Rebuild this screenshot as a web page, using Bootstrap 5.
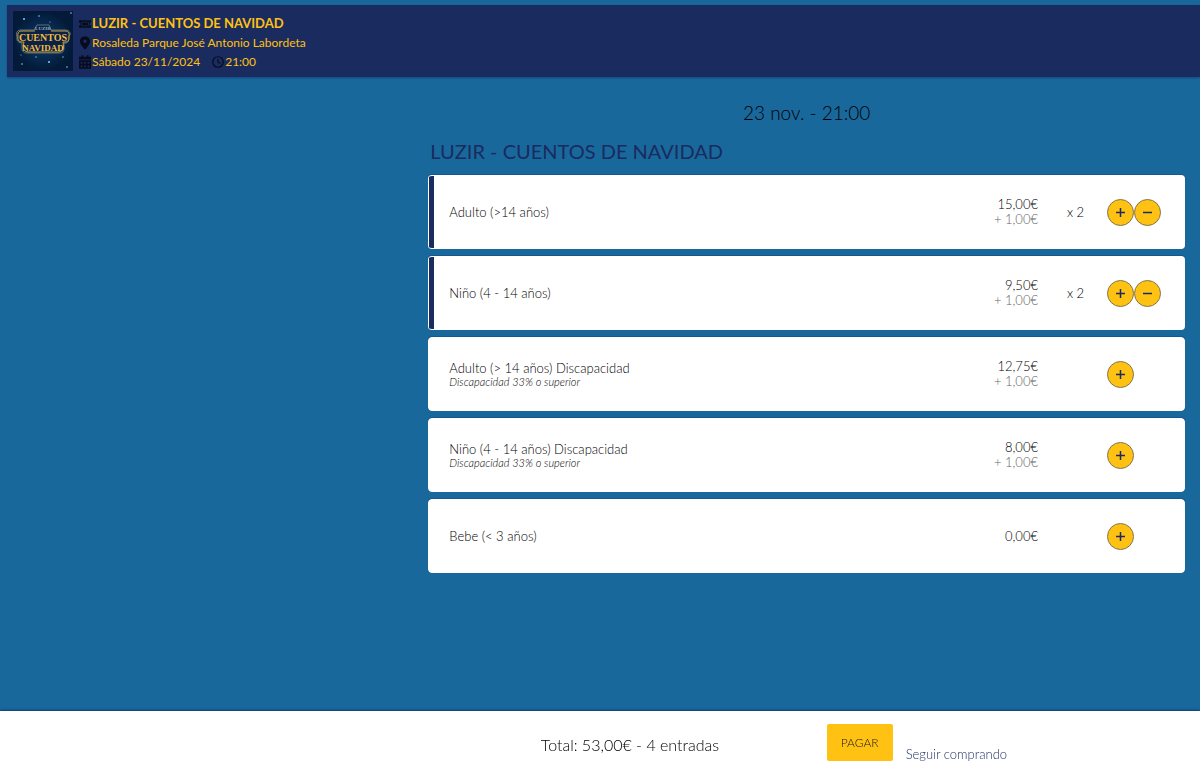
<!DOCTYPE html>
<html lang="es">
<head>
<meta charset="utf-8">
<meta name="viewport" content="width=device-width, initial-scale=1">
<title>LUZIR - Cuentos de Navidad</title>
<link href="https://cdn.jsdelivr.net/npm/bootstrap@5.3.0/dist/css/bootstrap.min.css" rel="stylesheet">
<style>
:root { --navy: #1a2b5f; --sea: #19689c; --gold: #ffc112; }
body { background: var(--sea); color: #000; font-family: Lato, sans-serif; font-weight: 300; font-size: 13px; line-height: 16px; }
.event-bar { background: var(--navy); color: var(--gold); margin: 5px 0 0 7px; padding: 6px; min-height: 72px; gap: 6px; box-shadow: 0 1px 2px rgba(0, 0, 60, .3); }
.event-logo { width: 60px; height: 60px; }
.event-info { font-size: 12px; font-weight: 400; line-height: 19px; padding-top: 3px; }
.event-info h1 { font-size: 13px; font-weight: 700; line-height: 19px; }
.event-info svg { width: 12px; height: 14px; flex: none; color: #060b1e; margin-right: 1px; }
.page-area { padding: 24px 0 100px 20px; }
.ticket-column { padding: 0 15px; }
.session-date { font-size: 19px; line-height: 24px; color: #000; }
.zone-name { font-size: 20px; font-weight: 400; line-height: 24px; color: var(--navy); margin: 14px 0 12px 2px; }
.ticket { background: #fff; border: 1px solid #fff; border-radius: 4px; height: 74px; margin-bottom: 7px; padding-left: 20px; box-shadow: 0 -1px 1px rgba(0, 50, 120, .3); }
.ticket.chosen { border-left: 0; padding-left: 21px; background: linear-gradient(90deg, #fff 1px, var(--navy) 1px, var(--navy) 6px, #fff 6px); }
.ticket-note { font-size: 11px; line-height: 12px; }
.price { width: 90px; line-height: 15px; }
.fee { color: #666; }
.quantity { width: 69px; padding-left: 29px; }
.steppers { width: 77px; }
.round-btn { width: 27px; height: 27px; border: 1px solid #80764f; border-radius: 50%; background: var(--gold); color: var(--navy); }
.round-btn svg { width: 9px; height: 9px; }
.pay-bar { background: #fff; min-height: 67px; padding-left: 20px; box-shadow: 0 -1px 2px rgba(0, 20, 70, .5); }
.pay-total { font-size: 16px; line-height: 20px; padding-top: 24px; }
.pay-btn { background: var(--gold); color: #222; font-size: 12px; font-weight: 300; line-height: 15px; width: 66px; height: 37px; border-radius: 2px; }
.pay-actions { padding-top: 13px; padding-left: 12px; gap: 13px; }
.pay-actions a { color: var(--navy); padding-top: 22px; }
</style>
</head>
<body>
<header class="event-bar d-flex">
  <svg class="event-logo flex-shrink-0" viewBox="0 0 60 60" role="img" aria-label="Luzir Cuentos de Navidad">
    <defs><radialGradient id="night"><stop offset="0" stop-color="#0d3d6b"/><stop offset="1" stop-color="#031a38"/></radialGradient></defs>
    <rect width="60" height="60" fill="url(#night)"/>
    <g fill="#8fc6ff"><circle cx="11" cy="8" r="1"/><circle cx="26" cy="5" r=".8"/><circle cx="37" cy="11" r=".6"/><circle cx="58" cy="2" r=".8"/><circle cx="55" cy="20" r=".6"/><circle cx="23" cy="46" r=".7"/><circle cx="36" cy="51" r="1"/><circle cx="50" cy="46" r=".7"/><circle cx="9" cy="53" r=".8"/><circle cx="54" cy="56" r=".8"/><circle cx="8" cy="44" r=".5"/></g>
    <path d="M24 14h12l2 5h15q5 1 4 5l-2 2q2 5-2 6h-2v5q0 5-4 5H14q-5 0-5-5v-5H8q-5-1-4-6-2-6 3-7h14z" fill="#0c2146" stroke="#5a7186"/>
    <path d="M22 20H8q-4 1-3 5-1 5 3 6h3q-3 9 4 10h31q6-1 4-10h3q4-1 3-6 1-4-3-5H38" fill="none" stroke="#c89d38" stroke-width="1"/>
    <g text-anchor="middle" font-family="Liberation Serif, serif" font-weight="700" fill="#edbd45"><text x="30" y="19" font-size="5" fill="#91adb9">LUZIR</text><text x="30" y="30" font-size="10">CUENTOS</text><text x="30" y="40" font-size="9">NAVIDAD</text></g>
  </svg>
  <div class="event-info">
    <h1 class="d-flex align-items-center mb-0">
      <svg viewBox="0 0 16 16" fill="currentColor" aria-hidden="true"><path fill-rule="evenodd" d="M0 3h16v3a2 2 0 0 0 0 4v3H0v-3a2 2 0 0 0 0-4zm3 2v6h10V5zm1 1h8v4H4z"/></svg>
      <span>LUZIR - CUENTOS DE NAVIDAD</span>
    </h1>
    <div class="d-flex align-items-center">
      <svg viewBox="0 0 14 16" fill="currentColor" aria-hidden="true"><path fill-rule="evenodd" d="M7 0a6 6 0 0 0-6 6c0 3 3 6 6 10 3-4 6-7 6-10a6 6 0 0 0-6-6zm0 4a2 2 0 1 1 0 4 2 2 0 0 1 0-4z"/></svg>
      <span>Rosaleda Parque José Antonio Labordeta</span>
    </div>
    <div class="d-flex align-items-center">
      <svg viewBox="0 0 14 16" fill="currentColor" aria-hidden="true"><path fill-rule="evenodd" d="M3 0h2v2h4V0h2v2h3v3H0V2h3zM0 6h14v10H0zm2 2v2h2V8zm4 0v2h2V8zm4 0v2h2V8zm-8 4v2h2v-2zm4 0v2h2v-2zm4 0v2h2v-2z"/></svg>
      <span class="me-2 pe-1">Sábado 23/11/2024</span>
      <svg viewBox="0 0 16 16" fill="none" stroke="currentColor" stroke-width="1.6" aria-hidden="true"><circle cx="8" cy="8" r="7"/><path d="M8 4v4l3 2"/></svg>
      <span>21:00</span>
    </div>
  </div>
</header>

<main class="page-area">
  <div class="row g-0">
    <section class="col-8 offset-4 ticket-column">
      <div class="session-date text-center">23 nov. - 21:00</div>
      <h2 class="zone-name">LUZIR - CUENTOS DE NAVIDAD</h2>

      <article class="ticket chosen d-flex align-items-center">
        <div class="flex-grow-1">Adulto (&gt;14 años)</div>
        <div class="price text-end">15,00€<div class="fee">+ 1,00€</div></div>
        <div class="quantity">x 2</div>
        <div class="steppers d-flex">
          <button type="button" class="round-btn p-0 d-flex align-items-center justify-content-center" aria-label="Añadir Adulto"><svg viewBox="0 0 9 9" stroke="currentColor" stroke-width="1.5"><path d="M0 4.5h9M4.5 0v9"/></svg></button>
          <button type="button" class="round-btn p-0 d-flex align-items-center justify-content-center" aria-label="Quitar Adulto"><svg viewBox="0 0 9 9" stroke="currentColor" stroke-width="1.5"><path d="M0 4.5h9"/></svg></button>
        </div>
      </article>

      <article class="ticket chosen d-flex align-items-center">
        <div class="flex-grow-1">Niño (4 - 14 años)</div>
        <div class="price text-end">9,50€<div class="fee">+ 1,00€</div></div>
        <div class="quantity">x 2</div>
        <div class="steppers d-flex">
          <button type="button" class="round-btn p-0 d-flex align-items-center justify-content-center" aria-label="Añadir Niño"><svg viewBox="0 0 9 9" stroke="currentColor" stroke-width="1.5"><path d="M0 4.5h9M4.5 0v9"/></svg></button>
          <button type="button" class="round-btn p-0 d-flex align-items-center justify-content-center" aria-label="Quitar Niño"><svg viewBox="0 0 9 9" stroke="currentColor" stroke-width="1.5"><path d="M0 4.5h9"/></svg></button>
        </div>
      </article>

      <article class="ticket d-flex align-items-center">
        <div class="flex-grow-1">Adulto (&gt; 14 años) Discapacidad<div class="ticket-note fst-italic">Discapacidad 33% o superior</div></div>
        <div class="price text-end">12,75€<div class="fee">+ 1,00€</div></div>
        <div class="quantity"></div>
        <div class="steppers d-flex">
          <button type="button" class="round-btn p-0 d-flex align-items-center justify-content-center" aria-label="Añadir Adulto Discapacidad"><svg viewBox="0 0 9 9" stroke="currentColor" stroke-width="1.5"><path d="M0 4.5h9M4.5 0v9"/></svg></button>
        </div>
      </article>

      <article class="ticket d-flex align-items-center">
        <div class="flex-grow-1">Niño (4 - 14 años) Discapacidad<div class="ticket-note fst-italic">Discapacidad 33% o superior</div></div>
        <div class="price text-end">8,00€<div class="fee">+ 1,00€</div></div>
        <div class="quantity"></div>
        <div class="steppers d-flex">
          <button type="button" class="round-btn p-0 d-flex align-items-center justify-content-center" aria-label="Añadir Niño Discapacidad"><svg viewBox="0 0 9 9" stroke="currentColor" stroke-width="1.5"><path d="M0 4.5h9M4.5 0v9"/></svg></button>
        </div>
      </article>

      <article class="ticket d-flex align-items-center">
        <div class="flex-grow-1">Bebe (&lt; 3 años)</div>
        <div class="price text-end">0,00€</div>
        <div class="quantity"></div>
        <div class="steppers d-flex">
          <button type="button" class="round-btn p-0 d-flex align-items-center justify-content-center" aria-label="Añadir Bebe"><svg viewBox="0 0 9 9" stroke="currentColor" stroke-width="1.5"><path d="M0 4.5h9M4.5 0v9"/></svg></button>
        </div>
      </article>
    </section>
  </div>
</main>

<footer class="pay-bar fixed-bottom">
  <div class="row g-0">
    <div class="col-8 offset-4 ps-3">
      <div class="row g-0">
        <div class="col-6 pay-total text-center ps-3">Total: 53,00€ - 4 entradas</div>
        <div class="col-6 pay-actions d-flex align-items-start">
          <button type="button" class="btn pay-btn p-0">PAGAR</button>
          <a href="#" class="text-decoration-none">Seguir comprando</a>
        </div>
      </div>
    </div>
  </div>
</footer>
<script src="https://cdn.jsdelivr.net/npm/bootstrap@5.3.0/dist/js/bootstrap.bundle.min.js"></script>
</body>
</html>
